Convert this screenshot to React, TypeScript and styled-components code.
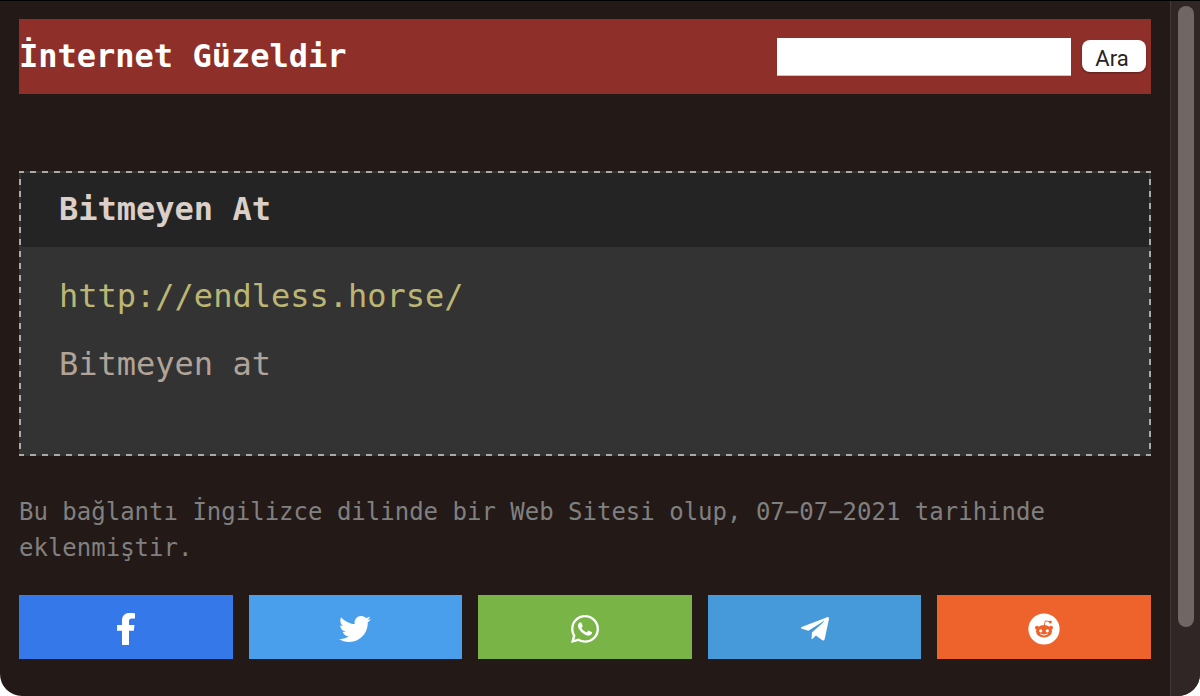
import React from 'react';
import styled, { createGlobalStyle } from 'styled-components';
import { FaTelegramPlane, FaTwitter, FaWhatsapp } from 'react-icons/fa';

const GlobalStyle = createGlobalStyle`
  *, *::before, *::after { box-sizing: border-box; }
  html { background: #fff; }
  body {
    margin: 0;
    font-family: 'DejaVu Sans Mono', 'Liberation Mono', monospace;
    font-size: 32px;
  }
`;

const Window = styled.div`
  display: flex;
  min-height: 100vh;
  overflow: hidden;
  background: #231917;
  border-top: 1px solid #000;
  border-radius: 0 0 22px 22px;
`;

const Page = styled.div`
  flex: 1;
  min-width: 0;
  padding: 18px 19px 36px;
`;

const Header = styled.header`
  display: flex;
  align-items: center;
  justify-content: space-between;
  min-height: 75px;
  padding-right: 5px;
  background: #8e2f29;
`;

const SiteTitle = styled.h1`
  margin: 0;
  padding-bottom: 2px;
  font-size: 32px;
  line-height: 40px;
  color: #fff;
`;

const SearchForm = styled.form`
  display: flex;
  align-items: center;
  gap: 11px;
`;

const SearchInput = styled.input`
  width: 294px;
  height: 38px;
  padding: 4px 8px;
  border: 0;
  border-bottom: 1px solid #c9c4c3;
  border-radius: 0;
  outline: 0;
  background: #fff;
  font: 22px Roboto, sans-serif;
`;

const SearchButton = styled.button`
  width: 64px;
  height: 32px;
  margin-bottom: 2px;
  padding: 6px 4px 0 0;
  border: 0;
  border-radius: 8px;
  background: #fff;
  box-shadow: 0 1px 2px rgba(0, 0, 0, 0.35);
  color: #252525;
  font: 22px/26px Roboto, sans-serif;
`;

/* The outline uses gradients so that dashes and gaps are both 6px long. */
const Card = styled.article`
  margin-top: 77px;
  padding: 2px;
  background:
    repeating-linear-gradient(90deg, #aaa 0 5px, transparent 5px 11px, #aaa 11px 12px) top / 100% 2px no-repeat,
    repeating-linear-gradient(90deg, #aaa 0 5px, transparent 5px 11px, #aaa 11px 12px) bottom / 100% 2px no-repeat,
    repeating-linear-gradient(#aaa 0 2px, transparent 2px 8px, #aaa 8px 12px) left / 2px 100% no-repeat,
    repeating-linear-gradient(#aaa 0 2px, transparent 2px 8px, #aaa 8px 12px) right / 2px 100% no-repeat,
    #333;
`;

const CardTitle = styled.h2`
  margin: 0;
  padding: 16px 38px 18px;
  background: #242424;
  color: #dad0c9;
  font-size: 32px;
  line-height: 40px;
`;

const CardBody = styled.div`
  display: grid;
  gap: 28px;
  padding: 29px 38px 70px;
  line-height: 40px;
`;

const SiteLink = styled.a`
  justify-self: start;
  color: #bcb674;
  text-decoration: none;
`;

const Description = styled.p`
  margin: 0;
  color: #b1a398;
`;

const Meta = styled.p`
  margin: 38px 0 29px;
  color: #808080;
  font-size: 24px;
  line-height: 36px;
`;

const ShareBar = styled.nav`
  display: grid;
  grid-template-columns: repeat(5, 1fr);
  gap: 16px;
`;

const ShareLink = styled.a<{ $color: string }>`
  display: flex;
  align-items: center;
  justify-content: center;
  height: 64px;
  padding-top: 4px;
  background: ${({ $color }) => $color};
  color: #fff;
`;

const ScrollTrack = styled.div`
  width: 30px;
  padding: 5px 6px 0 7px;
  border-left: 1px solid #433836;
  background: #302625;
`;

const ScrollThumb = styled.div`
  height: 90%;
  border-radius: 8px;
  background: #706664;
`;

function FacebookIcon({ size }: { size: number }) {
  return (
    <svg width={size} height={size} viewBox="-7 0 32 32" fill="currentColor" aria-hidden>
      <path d="M5 32V17.7H0V12h5V7.5C5 2.6 8 0 12.3 0c2.2 0 4.9.2 5.7.3v5.2h-3c-2.4 0-3 1.1-3 2.8V12h5.5l-.7 5.7H12V32z" />
    </svg>
  );
}

function RedditIcon({ size }: { size: number }) {
  return (
    <svg width={size} height={size} viewBox="0 0 32 32" aria-hidden>
      <circle cx="16" cy="16" r="15.6" fill="#fff" />
      <g fill="#ee622b">
        <ellipse cx="16" cy="18.3" rx="8" ry="6.2" />
        <circle cx="9" cy="14.8" r="2" />
        <circle cx="23" cy="14.8" r="2" />
        <circle cx="22.3" cy="9" r="1.6" />
      </g>
      <path d="M16.2 12.8 17.3 7.8 22 8.8" fill="none" stroke="#ee622b" strokeWidth="0.9" strokeLinejoin="round" />
      <circle cx="12.7" cy="17.8" r="1.6" fill="#fff" />
      <circle cx="19.3" cy="17.8" r="1.6" fill="#fff" />
      <path d="M12.8 21.2q3.2 2 6.4 0" fill="none" stroke="#fff" strokeWidth="1" strokeLinecap="round" />
    </svg>
  );
}

const networks = [
  { name: 'Facebook', color: '#3578ea', Icon: FacebookIcon },
  { name: 'Twitter', color: '#4a9fec', Icon: FaTwitter },
  { name: 'WhatsApp', color: '#78b446', Icon: FaWhatsapp },
  { name: 'Telegram', color: '#469ad9', Icon: FaTelegramPlane },
  { name: 'Reddit', color: '#ee622b', Icon: RedditIcon },
];

export default function App() {
  return (
    <>
      <GlobalStyle />
      <Window>
        <Page>
          <Header>
            <SiteTitle>İnternet Güzeldir</SiteTitle>
            <SearchForm role="search" onSubmit={(e) => e.preventDefault()}>
              <SearchInput type="text" name="q" aria-label="Ara" />
              <SearchButton type="submit">Ara</SearchButton>
            </SearchForm>
          </Header>
          <main>
            <Card>
              <CardTitle>Bitmeyen At</CardTitle>
              <CardBody>
                <SiteLink href="http://endless.horse/">http://endless.horse/</SiteLink>
                <Description>Bitmeyen at</Description>
              </CardBody>
            </Card>
            <Meta>
              Bu bağlantı İngilizce dilinde bir Web Sitesi olup, 07−07−2021 tarihinde eklenmiştir.
            </Meta>
            <ShareBar>
              {networks.map(({ name, color, Icon }) => (
                <ShareLink key={name} href={`#${name.toLowerCase()}`} aria-label={name} $color={color}>
                  <Icon size={32} />
                </ShareLink>
              ))}
            </ShareBar>
          </main>
        </Page>
        <ScrollTrack aria-hidden>
          <ScrollThumb />
        </ScrollTrack>
      </Window>
    </>
  );
}
